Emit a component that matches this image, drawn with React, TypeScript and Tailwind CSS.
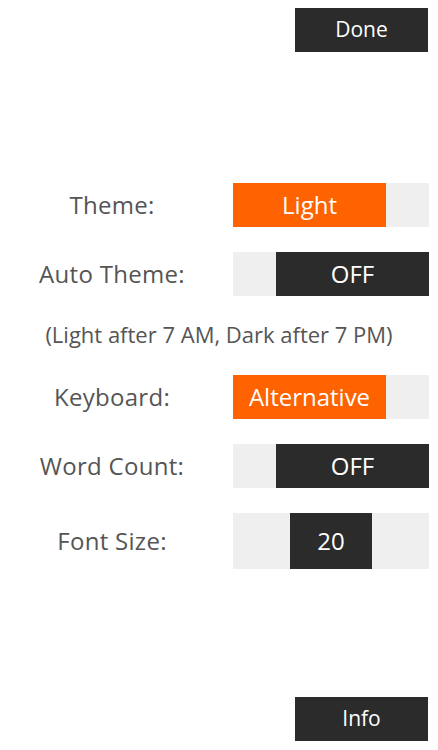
import React from 'react';

const font = { fontFamily: '"Open Sans", "Noto Sans", sans-serif' };

const Row = ({ label, children, tall }: { label: string; children: React.ReactNode; tall?: boolean }) => (
  <div className="flex items-center">
    <div className="w-[224px] text-center text-[24px] text-[#555555] tracking-[0.3px]">{label}</div>
    <div className={`ml-[9px] w-[196px] flex bg-[#efefef] ${tall ? 'h-[56px]' : 'h-[44px]'}`}>{children}</div>
  </div>
);

const App = () => {
  return (
    <div className="w-[438px] h-[750px] bg-white flex flex-col" style={font}>
      <div className="flex justify-end pt-2 pr-[10px]">
        <button className="w-[133px] h-[44px] bg-[#2b2b2b] text-white text-[21px]">Done</button>
      </div>

      <div className="mt-[131px] flex flex-col">
        <Row label="Theme:">
          <div className="w-[153px] h-full bg-[#ff6200] text-white text-[24px] flex items-center justify-center">Light</div>
        </Row>

        <div className="mt-[25px]">
          <Row label="Auto Theme:">
            <div className="ml-[43px] w-[153px] h-full bg-[#2b2b2b] text-white text-[24px] flex items-center justify-center">OFF</div>
          </Row>
        </div>

        <div className="h-[79px] flex items-center justify-center text-[22px] text-[#555555] pb-[2px]">
          (Light after 7 AM, Dark after 7 PM)
        </div>

        <Row label="Keyboard:">
          <div className="w-[153px] h-full bg-[#ff6200] text-white text-[24px] flex items-center justify-center">Alternative</div>
        </Row>

        <div className="mt-[25px]">
          <Row label="Word Count:">
            <div className="ml-[43px] w-[153px] h-full bg-[#2b2b2b] text-white text-[24px] flex items-center justify-center">OFF</div>
          </Row>
        </div>

        <div className="mt-[25px]">
          <Row label="Font Size:" tall>
            <div className="ml-[57px] w-[82px] h-full bg-[#2b2b2b] text-white text-[24px] flex items-center justify-center">20</div>
          </Row>
        </div>
      </div>

      <div className="mt-auto flex justify-end pb-[9px] pr-[10px]">
        <button className="w-[133px] h-[44px] bg-[#2b2b2b] text-white text-[21px]">Info</button>
      </div>
    </div>
  );
};

export default App;
